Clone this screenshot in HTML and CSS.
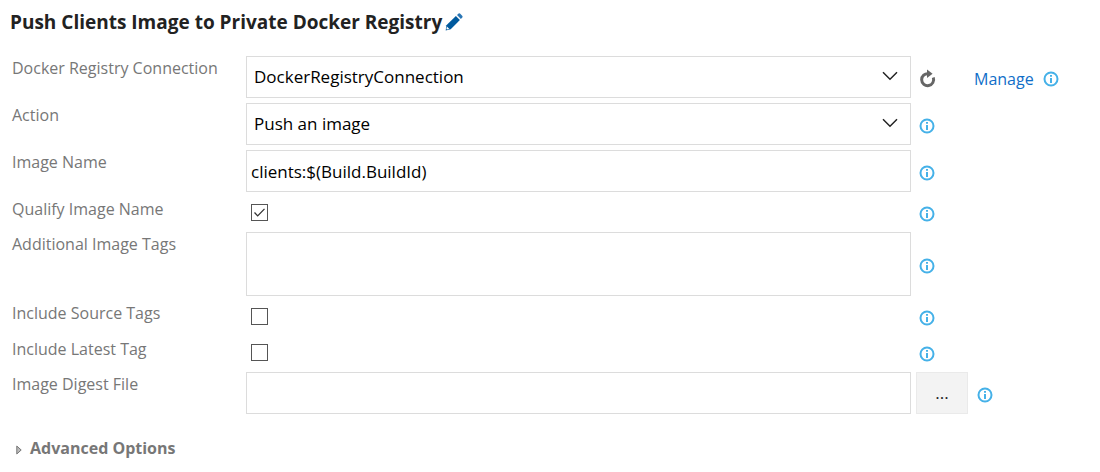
FILE: index.html
```html
<!DOCTYPE html>
<html lang="en">
<head>
<meta charset="utf-8">
<title>Push Clients Image to Private Docker Registry</title>
<link rel="stylesheet" href="styles.css">
</head>
<body>
<svg class="symbols" aria-hidden="true">
  <symbol id="info" viewBox="0 0 16 16">
    <circle cx="8" cy="8" r="6.5" fill="none" stroke="#45b1e8" stroke-width="2"/>
    <path d="M7 4.1h2v1.7H7zM7 6.9h2v5H7z" fill="#45b1e8"/>
  </symbol>
  <symbol id="chevron" viewBox="0 0 16 10">
    <path d="M1 1.2l7 7 7-7" fill="none" stroke="#222" stroke-width="1.5"/>
  </symbol>
</svg>
<main class="task">
  <header class="heading">
    <h1 class="title">Push Clients Image to Private Docker Registry</h1>
    <button class="icon-button" type="button" aria-label="Rename">
      <svg class="pencil" viewBox="0 0 18 18"><path d="M1.4 12.2L10.9 3l4 4-9.2 9.3-5 1.1z" fill="#005a9e"/><path d="M12 2L13.6.5q.7-.5 1.4.1l2.4 2.4q.5.7 0 1.3L15.9 5.9z" fill="#2a76b5"/><path d="M1.9 13.6l2.5 2.5-2.4.5-.6-.6z" fill="#fff"/></svg>
    </button>
  </header>
  <form class="form">
    <div class="row">
      <label class="label" for="connection">Docker Registry Connection</label>
      <div class="select">
        <select class="field" id="connection"><option>DockerRegistryConnection</option></select>
        <svg class="chevron"><use href="#chevron"/></svg>
      </div>
      <div class="aside">
        <button class="icon-button" type="button" aria-label="Refresh">
          <svg class="refresh" viewBox="0 0 18 20"><path d="M9.5 4.7A6 6 0 1 0 14.3 8.6" fill="none" stroke="#666" stroke-width="3"/><path d="M8 .6L13.6 4.8 8 9z" fill="#666"/></svg>
        </button>
        <a class="manage" href="#">Manage</a>
        <svg class="info"><use href="#info"/></svg>
      </div>
    </div>
    <div class="row">
      <label class="label" for="action">Action</label>
      <div class="select">
        <select class="field" id="action"><option>Push an image</option></select>
        <svg class="chevron"><use href="#chevron"/></svg>
      </div>
      <div class="aside"><svg class="info"><use href="#info"/></svg></div>
    </div>
    <div class="row">
      <label class="label" for="image">Image Name</label>
      <input class="field field-text" id="image" type="text" value="clients:$(Build.BuildId)">
      <div class="aside"><svg class="info"><use href="#info"/></svg></div>
    </div>
    <div class="row row-check">
      <label class="label" for="qualify">Qualify Image Name</label>
      <div class="check">
        <input class="box" id="qualify" type="checkbox" checked>
        <svg class="tick" viewBox="0 0 11 9"><path d="M.5 4.5l3.2 3.4L10.5.9" fill="none" stroke="#333" stroke-width="1.3"/></svg>
      </div>
      <div class="aside"><svg class="info"><use href="#info"/></svg></div>
    </div>
    <div class="row">
      <label class="label" for="tags">Additional Image Tags</label>
      <textarea class="field field-area" id="tags"></textarea>
      <div class="aside"><svg class="info"><use href="#info"/></svg></div>
    </div>
    <div class="row row-check">
      <label class="label" for="source">Include Source Tags</label>
      <div class="check"><input class="box" id="source" type="checkbox"></div>
      <div class="aside"><svg class="info"><use href="#info"/></svg></div>
    </div>
    <div class="row row-check row-last-check">
      <label class="label" for="latest">Include Latest Tag</label>
      <div class="check"><input class="box" id="latest" type="checkbox"></div>
      <div class="aside"><svg class="info"><use href="#info"/></svg></div>
    </div>
    <div class="row">
      <label class="label" for="digest">Image Digest File</label>
      <input class="field field-text" id="digest" type="text">
      <div class="aside aside-browse">
        <button class="browse" type="button" aria-label="Browse">...</button>
        <svg class="info"><use href="#info"/></svg>
      </div>
    </div>
  </form>
  <button class="advanced" type="button" aria-expanded="false">
    <svg class="caret" viewBox="0 0 6 10"><path d="M.8 1v8L5.2 5z" fill="#bbb" stroke="#777"/></svg>
    Advanced Options
  </button>
</main>
</body>
</html>
```
FILE: styles.css
```css
* {
  box-sizing: border-box;
}

body {
  margin: 0;
  background: #fff;
  color: #000;
  font: 17px/24px "Open Sans", "Noto Sans", sans-serif;
}

button,
input,
select,
textarea {
  margin: 0;
  font: inherit;
  color: inherit;
}

svg {
  display: block;
  flex: none;
}

.symbols {
  position: absolute;
  width: 0;
  height: 0;
}

.task {
  padding: 8px 0 8px 10px;
}

.heading {
  display: flex;
  align-items: center;
  gap: 3px;
  height: 28px;
  margin-bottom: 20px;
}

.title {
  margin: 0;
  color: #222;
  font-size: 19px;
  font-weight: 700;
  line-height: 28px;
}

.icon-button {
  padding: 0;
  border: 0;
  background: none;
  cursor: pointer;
}

.pencil {
  width: 18px;
  height: 18px;
}

.form {
  display: flex;
  flex-direction: column;
  gap: 5px;
}

.row {
  display: grid;
  grid-template-columns: 236px 1fr 189px;
  align-items: start;
}

.row-check {
  min-height: 30px;
}

.row-last-check {
  margin-top: 1px;
}

.label {
  padding-left: 2px;
  color: #777;
  font-size: 16px;
}

.select {
  position: relative;
}

.field {
  display: block;
  width: 100%;
  height: 42px;
  padding: 0 7px;
  border: 1px solid #dcdcdc;
  border-radius: 0;
  background: #fff;
  appearance: none;
  outline: 0;
}

.field-text {
  padding: 0 4px;
}

.field-area {
  height: 64px;
  resize: none;
}

.chevron {
  position: absolute;
  top: 15px;
  right: 13px;
  width: 16px;
  height: 10px;
  pointer-events: none;
}

.aside {
  display: flex;
  align-items: center;
  align-self: stretch;
  padding: 4px 0 0 8px;
}

.aside-browse {
  gap: 9px;
  padding: 0 0 0 5px;
}

.info {
  width: 16px;
  height: 16px;
}

.aside-browse .info {
  margin-top: 4px;
}

.refresh {
  width: 18px;
  height: 20px;
}

.manage {
  margin: 0 9px 0 37px;
  color: #106ec8;
  font-size: 16px;
  text-decoration: none;
}

.check {
  position: relative;
  padding: 7px 0 0 5px;
}

.box {
  display: block;
  width: 17px;
  height: 17px;
  border: 1px solid #555;
  background: #fff;
  appearance: none;
}

.tick {
  position: absolute;
  top: 11px;
  left: 8px;
  width: 11px;
  height: 9px;
  pointer-events: none;
}

.browse {
  width: 52px;
  height: 42px;
  padding: 0;
  border: 1px solid #eaeaea;
  background: #f3f3f3;
  color: #222;
}

.advanced {
  display: flex;
  align-items: center;
  gap: 8px;
  margin-top: 22px;
  padding: 0 0 0 6px;
  border: 0;
  background: none;
  color: #777;
  font-size: 16px;
  font-weight: 700;
}

.caret {
  width: 6px;
  height: 10px;
  margin-top: 4px;
}
```
